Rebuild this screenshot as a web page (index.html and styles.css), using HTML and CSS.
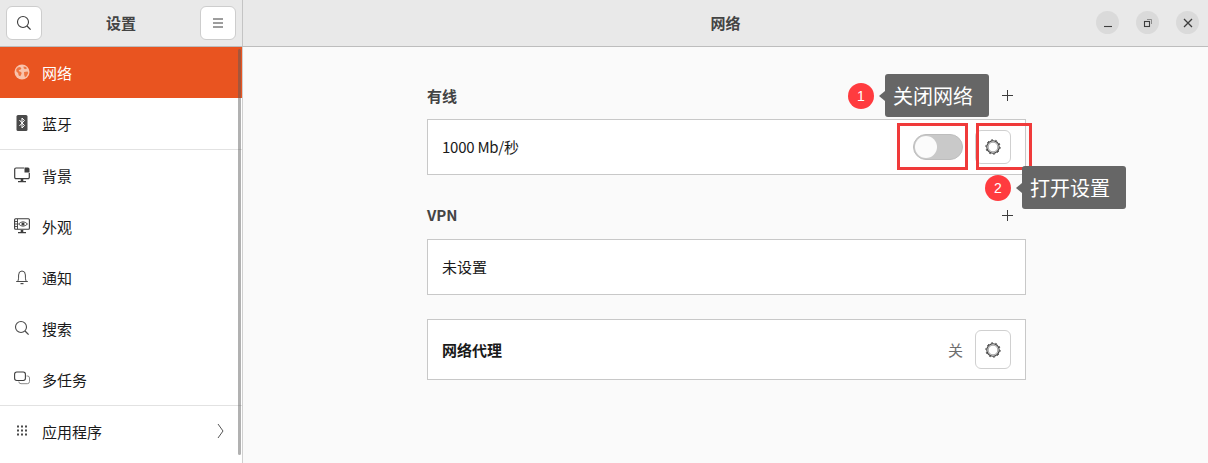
FILE: index.html
```html
<!DOCTYPE html>
<html lang="zh-CN">
<head>
<meta charset="utf-8">
<title>设置</title>
<link rel="stylesheet" href="styles.css">
</head>
<body>
<svg class="defs" width="0" height="0">
  <symbol id="gear" viewBox="0 0 16 16">
    <circle cx="8" cy="8" r="7.100" fill="none" stroke="#3d3d3d" stroke-width="1" stroke-dasharray="2 2.460"/>
    <circle cx="8" cy="8" r="6.200" fill="none" stroke="#3d3d3d" stroke-width="1.100"/>
    <circle cx="8" cy="8" r="4.900" fill="none" stroke="#9a9a9a" stroke-width="1"/>
  </symbol>
  <symbol id="plus" viewBox="0 0 11 11">
    <path d="M5.500 0v11M0 5.500h11" stroke="#3d3d3d" fill="none"/>
  </symbol>
</svg>
<div class="window">
  <header class="titlebar">
    <div class="titlebar-left">
      <button class="hbtn"><svg width="16" height="16" viewBox="0 0 16 16"><circle cx="7" cy="7" r="5.500" fill="none" stroke="#3d3d3d" stroke-width="1.100"/><path d="M11 11l3.600 3.600" stroke="#3d3d3d" stroke-width="1.300"/></svg></button>
      <div class="app-title">设置</div>
      <button class="hbtn"><svg width="12" height="10" viewBox="0 0 12 10"><path d="M1 1h10M1 5h10M1 9h10" stroke="#3d3d3d" fill="none"/></svg></button>
    </div>
    <div class="titlebar-right">
      <div class="page-title">网络</div>
      <div class="winbtns">
        <span class="winbtn"><svg width="10" height="10" viewBox="0 0 10 10"><path d="M1 8.500h8" stroke="#3d3d3d" stroke-width="1.100"/></svg></span>
        <span class="winbtn"><svg width="10" height="10" viewBox="0 0 10 10"><rect x="1.500" y="3.500" width="5" height="5" fill="none" stroke="#3d3d3d" stroke-width="1.100"/><path d="M4 1.500h4.500V6" fill="none" stroke="#777" stroke-width=".8"/></svg></span>
        <span class="winbtn"><svg width="10" height="10" viewBox="0 0 10 10"><path d="M1 1l8 8M9 1l-8 8" stroke="#3d3d3d" stroke-width="1.300"/></svg></span>
      </div>
    </div>
  </header>
  <div class="body">
    <aside class="sidebar">
      <div class="nav">
        <div class="nav-item active"><svg class="ico" width="16" height="16" viewBox="0 0 16 16"><circle cx="8" cy="8" r="7.500" fill="#f9c3ac"/><path d="M2.200 5.500l1.600-2 2.200-.5 1.400 1.200-1 1.500-1.800.3.800 1.500 1.800.6.400 1.700-1.300 2.400-1.600-.8-.6-2.400-1.700-1.500zM9.500 2.500l2.500.6 1 1.400-2 .8-1.300-1zM10 8l3.500-.5.800 1.500-1.800 3.300-1.500 1-.8-2.300z" fill="#ee7440"/></svg><span>网络</span></div>
        <div class="nav-item"><svg class="ico" width="16" height="16" viewBox="0 0 16 16"><rect x="2.500" y="0" width="11" height="16" rx="1.500" fill="#4a4a4a"/><path d="M5.400 5l5 5.500L8 13V3l2.400 2.500L5.400 11" fill="none" stroke="#fff"/></svg><span>蓝牙</span></div>
        <div class="sep"></div>
        <div class="nav-item"><svg class="ico" width="16" height="16" viewBox="0 0 16 16"><path d="M10 1H2a1.300 1.300 0 0 0-1.300 1.300v8A1.300 1.300 0 0 0 2 11.600h12a1.300 1.300 0 0 0 1.300-1.300V6" fill="none" stroke="#3d3d3d" stroke-width="1.200"/><path d="M10.500.6h3.500a1.500 1.500 0 0 1 1.500 1.500v3.400h-5z" fill="#3d3d3d"/><path d="M6.700 12h2.600v2H12v1.300H4V14h2.700z" fill="#3d3d3d"/></svg><span>背景</span></div>
        <div class="nav-item"><svg class="ico" width="16" height="16" viewBox="0 0 16 16"><rect x=".6" y=".8" width="14.800" height="10.400" rx="1" fill="none" stroke="#3d3d3d" stroke-width="1.100"/><path d="M3.500 1v10M.8 3.500h2.700M.8 6h2.700M.8 8.500h2.700" stroke="#3d3d3d" stroke-width=".9"/><path d="M4.500 6q4.500-4.400 9 0q-4.500 4.400-9 0z" fill="none" stroke="#3d3d3d" stroke-width=".9"/><circle cx="9" cy="6" r="1.600" fill="#3d3d3d"/><path d="M6.700 12h2.600v2H12v1.300H4V14h2.700z" fill="#3d3d3d"/></svg><span>外观</span></div>
        <div class="nav-item"><svg class="ico" width="16" height="16" viewBox="0 0 16 16"><path d="M2.200 12.500h11.600M3.600 12.500c1-1.500 1-3.500 1-6.500a3.400 4 0 0 1 6.800 0c0 3 0 5 1 6.500" fill="none" stroke="#4a4a4a" stroke-width="1"/><path d="M6.500 14h3v1.200h-3z" fill="#4a4a4a"/></svg><span>通知</span></div>
        <div class="nav-item"><svg class="ico" width="16" height="16" viewBox="0 0 16 16"><circle cx="7" cy="7" r="5.500" fill="none" stroke="#4a4a4a" stroke-width="1.100"/><path d="M11 11l3.600 3.600" stroke="#4a4a4a" stroke-width="1.300"/></svg><span>搜索</span></div>
        <div class="nav-item"><svg class="ico" width="16" height="16" viewBox="0 0 16 16"><rect x=".6" y="1" width="10.800" height="8.500" rx="2.200" fill="none" stroke="#3d3d3d" stroke-width="1.100"/><path d="M12.500 5h1a2 2 0 0 1 2 2v3.500a2.200 2.200 0 0 1-2.200 2.200H7a2.200 2.200 0 0 1-2.200-2.200" fill="none" stroke="#8a8a8a" stroke-width="1"/></svg><span>多任务</span></div>
        <div class="sep"></div>
        <div class="nav-item apps"><svg class="ico" width="16" height="16" viewBox="0 0 16 16"><path d="M3 2.500h2v2H3zM7 2.500h2v2H7zM11 2.500h2v2h-2zM3 6.500h2v2H3zM7 6.500h2v2H7zM11 6.500h2v2h-2zM3 10.500h2v2H3zM7 10.500h2v2H7zM11 10.500h2v2h-2z" fill="#4a4a4a"/></svg><span>应用程序</span><svg class="chev" width="7" height="16" viewBox="0 0 7 16"><path d="M1 1l5 7-5 7" fill="none" stroke="#555" stroke-width="1"/></svg></div>
      </div>
      <div class="scrollbar"></div>
    </aside>
    <main class="content">
      <div class="column">
        <section class="group">
          <div class="group-head"><h2>有线</h2><svg class="plus" width="11" height="11"><use href="#plus"/></svg></div>
          <div class="card row-55">
            <span class="label tight">1000 Mb/秒</span>
            <div class="toggle"><span class="knob"></span></div>
            <button class="gear-btn"><svg width="16" height="16"><use href="#gear"/></svg></button>
          </div>
        </section>
        <section class="group">
          <div class="group-head"><h2>VPN</h2><svg class="plus" width="11" height="11"><use href="#plus"/></svg></div>
          <div class="card row-55"><span class="label">未设置</span></div>
        </section>
        <div class="card row-proxy">
          <span class="label strong">网络代理</span>
          <span class="state">关</span>
          <button class="gear-btn"><svg width="16" height="16"><use href="#gear"/></svg></button>
        </div>
      </div>
    </main>
  </div>
  <div class="mark mark-toggle"></div>
  <div class="mark mark-gear"></div>
  <div class="callout callout-1"><span class="num">1</span><span class="tip">关闭网络</span></div>
  <div class="callout callout-2"><span class="num">2</span><span class="tip">打开设置</span></div>
</div>
</body>
</html>
```
FILE: styles.css
```css
* { box-sizing: border-box; }
html, body { margin: 0; padding: 0; }
body {
  width: 1208px;
  height: 463px;
  overflow: hidden;
  background: #fafafa;
  font-family: "Noto Sans CJK SC", "Noto Sans", sans-serif;
  font-size: 15px;
  color: #1a1a1a;
}
.defs { position: absolute; }
.window { position: relative; width: 1208px; height: 463px; display: flex; flex-direction: column; }

.titlebar {
  height: 47px;
  flex: none;
  display: flex;
  background: #e9e9e9;
  border-bottom: 1px solid #bdbdbd;
}
.titlebar-left {
  width: 243px;
  flex: none;
  display: flex;
  align-items: center;
  justify-content: space-between;
  padding: 0 6px;
  border-right: 1px solid #c4c4c4;
}
.hbtn {
  width: 36px;
  height: 34px;
  padding: 0;
  display: flex;
  align-items: center;
  justify-content: center;
  background: #fff;
  border: 1px solid #cdcdcd;
  border-radius: 6px;
}
.app-title, .page-title { font-size: 15px; font-weight: 700; color: #444; padding-bottom: 2px; }
.titlebar-right {
  flex: 1;
  position: relative;
  display: flex;
  align-items: center;
  justify-content: center;
}
.winbtns {
  position: absolute;
  right: 9px;
  top: 11px;
  display: flex;
  gap: 17px;
}
.winbtn {
  width: 23px;
  height: 23px;
  border-radius: 50%;
  background: #dadada;
  display: flex;
  align-items: center;
  justify-content: center;
}

.body { flex: 1; display: flex; min-height: 0; }
.sidebar {
  width: 243px;
  flex: none;
  position: relative;
  background: #fff;
  border-right: 1px solid #d0d0d0;
}
.nav-item {
  height: 51px;
  display: flex;
  align-items: center;
  padding-left: 14px;
  gap: 12px;
  color: #1a1a1a;
  font-size: 15px;
}
.nav-item .ico { flex: none; position: relative; top: -1px; }
.nav-item.active { background: #e95420; color: #fff; }
.sep { height: 1px; background: #e2e2e2; }
.apps { position: relative; }
.chev { position: absolute; left: 217px; top: 17px; }
.scrollbar {
  position: absolute;
  left: 238px;
  top: 2px;
  width: 3px;
  height: 406px;
  border-radius: 2px;
  background: rgba(90, 90, 90, .47);
}

.content { flex: 1; background: #fafafa; display: flex; }
.column { width: 599px; margin-left: 184px; padding-top: 33px; display: flex; flex-direction: column; }
.group { margin-bottom: 24px; }
.group-head {
  height: 39px;
  display: flex;
  align-items: flex-start;
  justify-content: space-between;
  padding-right: 13px;
}
.group-head h2 {
  margin: 0;
  font-size: 15px;
  line-height: 32px;
  height: 32px;
  font-weight: 700;
  color: #444;
}
.group:first-child h2 { line-height: 32px; }
.group:not(:first-child) h2 { line-height: 30px; }
.group-head .plus { margin-top: 10px; }
.group:first-child { margin-bottom: 25px; }
.card {
  display: flex;
  align-items: center;
  padding: 0 14px;
  background: #fff;
  border: 1px solid #c8c8c8;
}
.row-55 { height: 56px; }
.row-proxy { height: 61px; }
.label { flex: 1; font-size: 15px; color: #1a1a1a; }
.row-55 .label { padding-bottom: 2px; }
.label.tight { letter-spacing: -.25px; }
.label.strong { font-weight: 700; }
.state { font-size: 15px; color: #6e6e6e; margin-right: 12px; }
.toggle {
  width: 50px;
  height: 26px;
  margin-right: 12px;
  border-radius: 13px;
  background: #c9c9c9;
  border: 1px solid #bdbdbd;
  padding: 1px;
}
.knob {
  display: block;
  width: 22px;
  height: 22px;
  border-radius: 50%;
  background: #fbfbfb;
}
.gear-btn {
  width: 36px;
  height: 34px;
  padding: 0;
  display: flex;
  align-items: center;
  justify-content: center;
  background: #fff;
  border: 1px solid #d0d0d0;
  border-radius: 6px;
}
.row-proxy .gear-btn { height: 39px; }

.mark { position: absolute; border: 3px solid #f03a3a; }
.mark-toggle { left: 897px; top: 123px; width: 71px; height: 47px; }
.mark-gear { left: 976px; top: 123px; width: 56px; height: 47px; }

.callout { position: absolute; display: flex; align-items: center; }
.callout-1 { left: 848px; top: 74px; }
.callout-2 { left: 985px; top: 166px; }
.num {
  width: 26px;
  height: 26px;
  border-radius: 50%;
  background: #ff3b3f;
  color: #fff;
  font-family: "Liberation Sans", sans-serif;
  font-size: 14px;
  display: flex;
  align-items: center;
  justify-content: center;
}
.tip {
  position: relative;
  margin-left: 11px;
  height: 43px;
  padding: 0 16px 0 8px;
  display: flex;
  align-items: center;
  background: #666;
  color: #fff;
  font-size: 20px;
  border-radius: 3px;
}
.tip::before {
  content: "";
  position: absolute;
  left: -6px;
  top: 50%;
  margin-top: -5px;
  border: 5px solid transparent;
  border-left: 0;
  border-right: 6px solid #666;
}
```
